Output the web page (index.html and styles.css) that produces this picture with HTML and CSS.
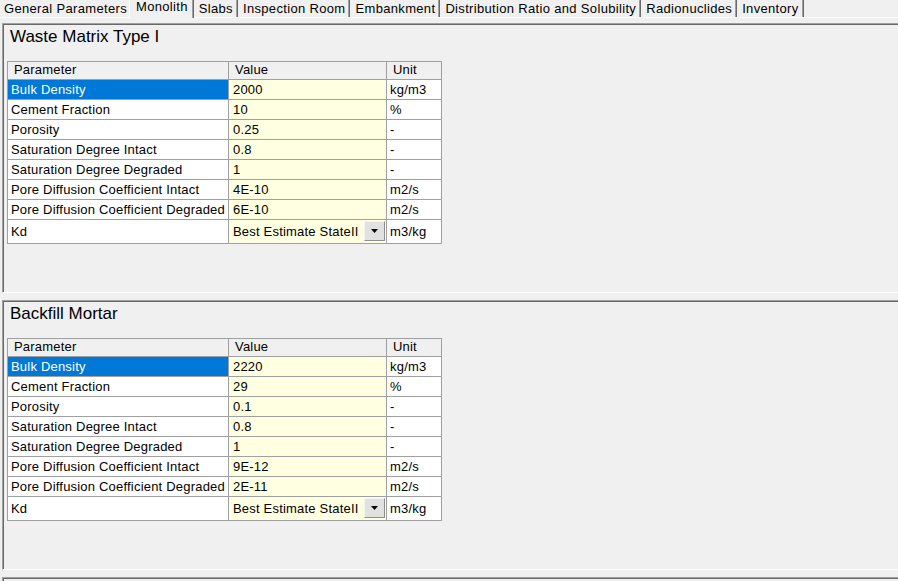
FILE: index.html
```html
<!DOCTYPE html>
<html>
<head>
<meta charset="utf-8">
<link rel="stylesheet" href="styles.css">
</head>
<body>
<div class="tabs">
  <div class="tab first">General Parameters</div>
  <div class="tab active">Monolith</div>
  <div class="tab">Slabs</div>
  <div class="tab">Inspection Room</div>
  <div class="tab">Embankment</div>
  <div class="tab">Distribution Ratio and Solubility</div>
  <div class="tab">Radionuclides</div>
  <div class="tab">Inventory</div>
</div>

<div class="panel">
  <div class="title">Waste Matrix Type I</div>
  <div class="grid">
    <div class="cell head">Parameter</div>
    <div class="cell head">Value</div>
    <div class="cell head">Unit</div>

    <div class="cell sel">Bulk Density</div>
    <div class="cell val">2000</div>
    <div class="cell">kg/m3</div>

    <div class="cell">Cement Fraction</div>
    <div class="cell val">10</div>
    <div class="cell">%</div>

    <div class="cell">Porosity</div>
    <div class="cell val">0.25</div>
    <div class="cell">-</div>

    <div class="cell">Saturation Degree Intact</div>
    <div class="cell val">0.8</div>
    <div class="cell">-</div>

    <div class="cell">Saturation Degree Degraded</div>
    <div class="cell val">1</div>
    <div class="cell">-</div>

    <div class="cell">Pore Diffusion Coefficient Intact</div>
    <div class="cell val">4E-10</div>
    <div class="cell">m2/s</div>

    <div class="cell">Pore Diffusion Coefficient Degraded</div>
    <div class="cell val">6E-10</div>
    <div class="cell">m2/s</div>

    <div class="cell tall">Kd</div>
    <div class="cell val tall combo"><span>Best Estimate StateII</span><span class="drop"><svg width="7" height="4" viewBox="0 0 7 4"><polygon points="0,0 7,0 3.5,4" fill="#000"/></svg></span></div>
    <div class="cell tall">m3/kg</div>
  </div>
</div>

<div class="panel">
  <div class="title">Backfill Mortar</div>
  <div class="grid">
    <div class="cell head">Parameter</div>
    <div class="cell head">Value</div>
    <div class="cell head">Unit</div>

    <div class="cell sel">Bulk Density</div>
    <div class="cell val">2220</div>
    <div class="cell">kg/m3</div>

    <div class="cell">Cement Fraction</div>
    <div class="cell val">29</div>
    <div class="cell">%</div>

    <div class="cell">Porosity</div>
    <div class="cell val">0.1</div>
    <div class="cell">-</div>

    <div class="cell">Saturation Degree Intact</div>
    <div class="cell val">0.8</div>
    <div class="cell">-</div>

    <div class="cell">Saturation Degree Degraded</div>
    <div class="cell val">1</div>
    <div class="cell">-</div>

    <div class="cell">Pore Diffusion Coefficient Intact</div>
    <div class="cell val">9E-12</div>
    <div class="cell">m2/s</div>

    <div class="cell">Pore Diffusion Coefficient Degraded</div>
    <div class="cell val">2E-11</div>
    <div class="cell">m2/s</div>

    <div class="cell tall">Kd</div>
    <div class="cell val tall combo"><span>Best Estimate StateII</span><span class="drop"><svg width="7" height="4" viewBox="0 0 7 4"><polygon points="0,0 7,0 3.5,4" fill="#000"/></svg></span></div>
    <div class="cell tall">m3/kg</div>
  </div>
</div>

<div class="panel stub"></div>
</body>
</html>
```

FILE: styles.css
```css
html, body {
  margin: 0;
  padding: 0;
  background: #f0f0f0;
  overflow: hidden;
}

body {
  width: 898px;
  height: 581px;
  font-family: "Liberation Sans", Arial, sans-serif;
  font-size: 13px;
  color: #000;
}

.tabs {
  display: flex;
  height: 17px;
  border-bottom: 1px solid #ffffff;
}

.tab {
  box-sizing: border-box;
  height: 17px;
  padding: 2px 4px 0 5px;
  line-height: 14px;
  letter-spacing: 0.33px;
  white-space: nowrap;
  border-right: 1px solid #696969;
  box-shadow: inset -1px 0 0 #a0a0a0;
}

.tab.first {
  padding: 2px 2px 0 4px;
  border-right: 0;
  box-shadow: none;
}

.tab.active {
  height: 18px;
  padding: 1px 5px 0 6px;
  line-height: 12px;
  border-left: 1px solid #ffffff;
  background: #f0f0f0;
}

.panel {
  box-sizing: border-box;
  height: 270px;
  margin: 5px 0 0 2px;
  border-top: 1px solid #a0a0a0;
  border-left: 1px solid #a0a0a0;
  border-bottom: 1px solid #ffffff;
  box-shadow: inset 1px 1px 0 #696969;
  padding: 1px 0 0 2px;
}

.panel + .panel {
  margin-top: 7px;
}

.panel.stub {
  height: 4px;
  border-bottom: 0;
}

.title {
  font-size: 17px;
  line-height: 20px;
  padding: 2px 0 0 5px;
}

.grid {
  display: grid;
  grid-template-columns: 221px 158px 55px;
  width: max-content;
  margin: 14px 0 0 2px;
  border-top: 1px solid #a0a0a0;
  border-left: 1px solid #a0a0a0;
}

.cell {
  box-sizing: border-box;
  height: 20px;
  padding-left: 3px;
  line-height: 19px;
  letter-spacing: 0.2px;
  white-space: nowrap;
  background: #ffffff;
  border-right: 1px solid #a0a0a0;
  border-bottom: 1px solid #a0a0a0;
}

.cell.head {
  height: 18px;
  line-height: 16px;
  padding-left: 6px;
  background: #f0f0f0;
}

.cell.sel {
  background: #0078d7;
  color: #ffffff;
}

.cell.val {
  background: #ffffe1;
  padding-left: 4px;
}

.cell.tall {
  height: 24px;
  line-height: 23px;
}

.cell.combo {
  display: flex;
  justify-content: space-between;
  align-items: center;
}

.drop {
  box-sizing: border-box;
  width: 21px;
  height: 20px;
  margin: 0 1px 1px 0;
  display: flex;
  align-items: center;
  justify-content: center;
  background: #e1e1e1;
  border: 1px solid;
  border-color: #f4f4f4 #8e8e8e #8e8e8e #f4f4f4;
}
```
